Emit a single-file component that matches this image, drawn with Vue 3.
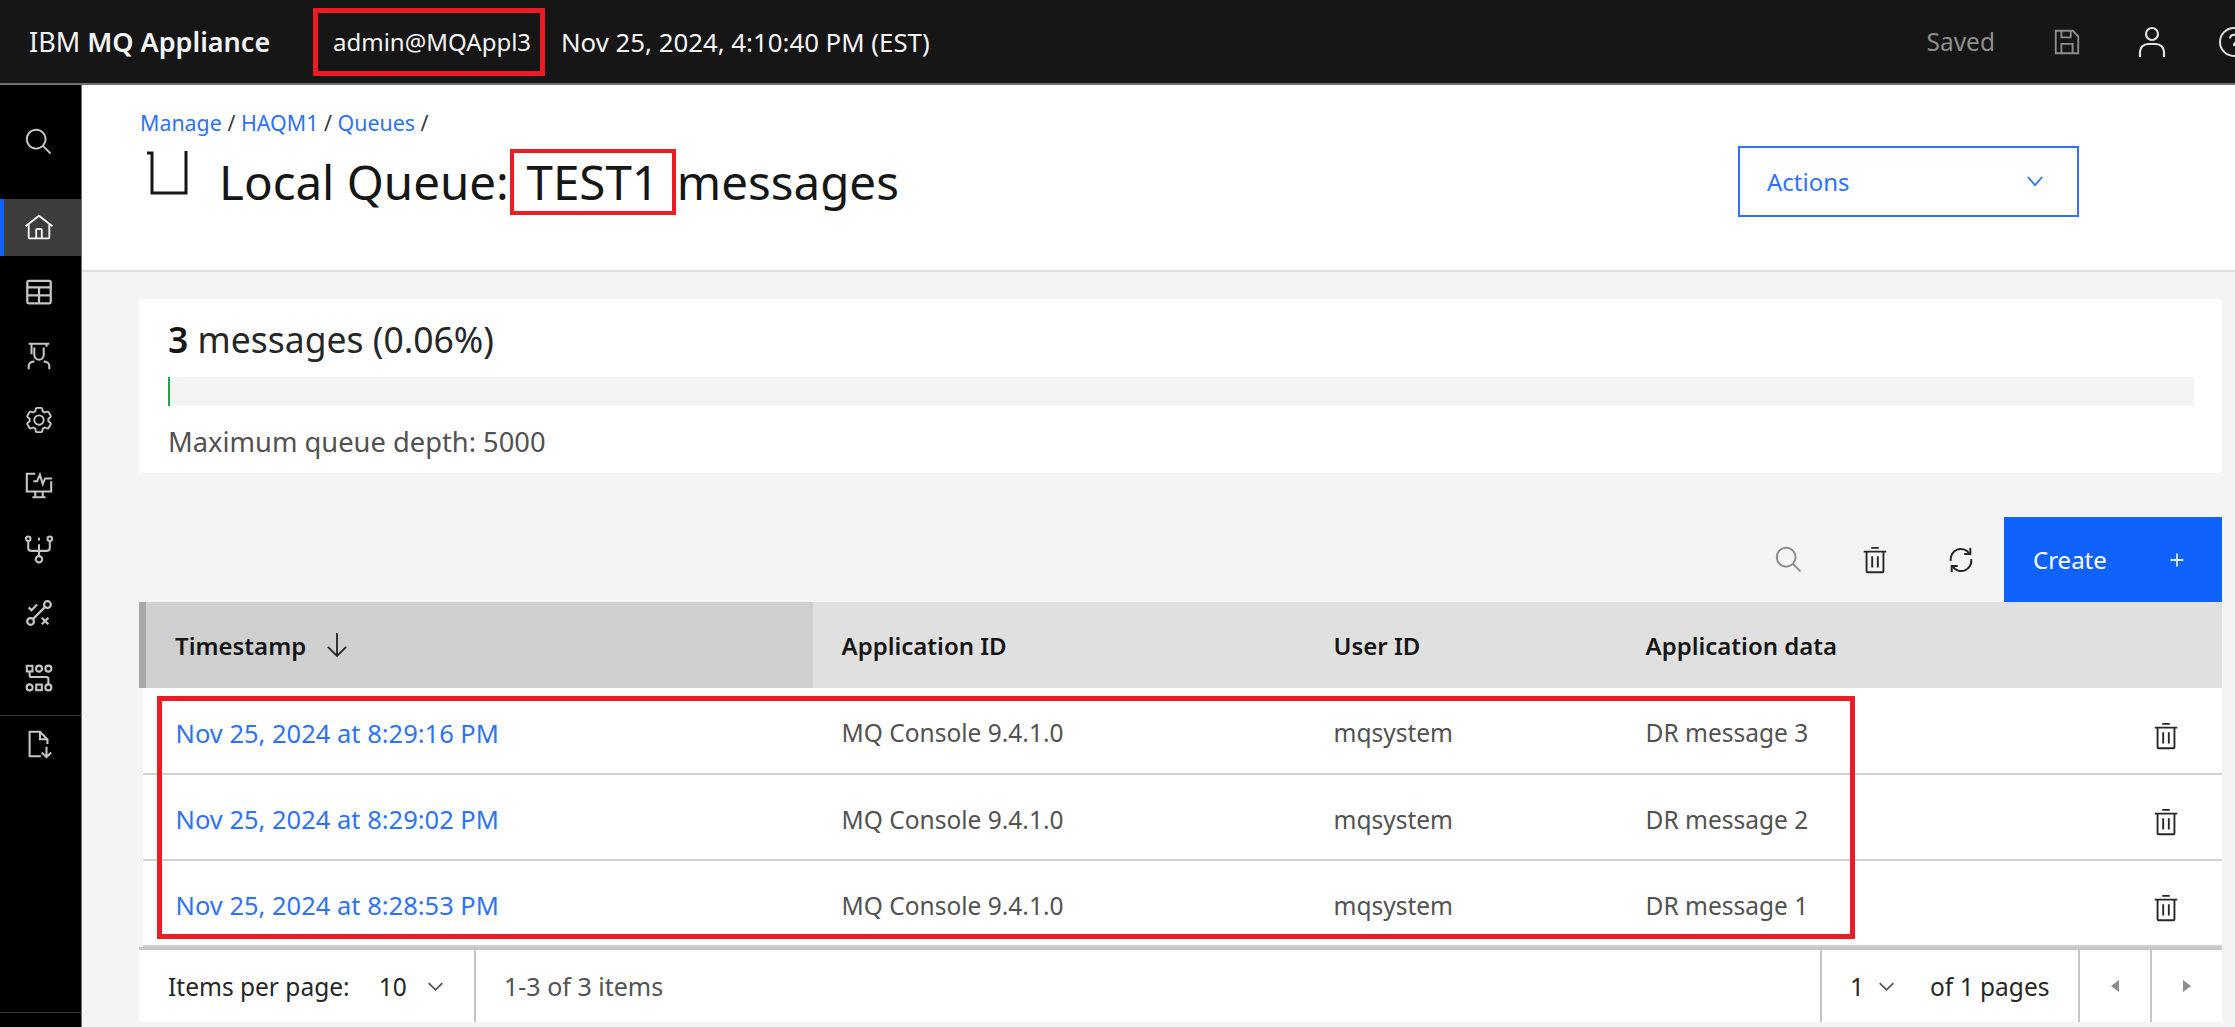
<script setup>
const rows = [
  { time: 'Nov 25, 2024 at 8:29:16 PM', app: 'MQ Console 9.4.1.0', user: 'mqsystem', data: 'DR message 3' },
  { time: 'Nov 25, 2024 at 8:29:02 PM', app: 'MQ Console 9.4.1.0', user: 'mqsystem', data: 'DR message 2' },
  { time: 'Nov 25, 2024 at 8:28:53 PM', app: 'MQ Console 9.4.1.0', user: 'mqsystem', data: 'DR message 1' }
]
const searchPath = 'M29 27.5859l-7.5521-7.5521a11.0177 11.0177 0 1 0-1.4141 1.4141L27.5859 29ZM4 13a9 9 0 1 1 9 9A9.01 9.01 0 0 1 4 13Z'
const trashPath = 'M12 12H14V24H12zM18 12H20V24H18zM4 6V8H6V28a2 2 0 002 2H24a2 2 0 002-2V8h2V6zM8 28V8H24V28zM12 2H20V4H12z'
</script>

<template>
  <div class="app">
    <header class="topbar">
      <div class="brand">IBM <b>MQ Appliance</b></div>
      <div class="user-box">admin@MQAppl3</div>
      <div class="clock">Nov 25, 2024, 4:10:40 PM (EST)</div>
      <div class="saved">Saved</div>
      <svg class="save-icon" viewBox="0 0 32 32" fill="none" stroke="#8d8d8d" stroke-width="2">
        <path d="M4 4H22L28 10V28H4Z" />
        <path d="M10 4V11H20V4M10 28V18H22V28" />
      </svg>
      <svg class="user-icon" viewBox="0 0 32 32" fill="none" stroke="#e0e0e0" stroke-width="2.2">
        <circle cx="16" cy="8" r="6" />
        <path d="M4 31V26A8 8 0 0 1 12 18H20A8 8 0 0 1 28 26V31" />
      </svg>
      <svg class="help-icon" viewBox="0 0 32 32" fill="none" stroke="#e0e0e0" stroke-width="2">
        <circle cx="16" cy="16" r="14" />
        <path d="M12 12.5A4 4 0 1 1 17.5 16.5C16.4 17 16 17.8 16 19V20" />
      </svg>
    </header>

    <div class="body">
      <nav class="sidenav">
        <div class="nav-item nav-search">
          <svg viewBox="0 0 32 32" fill="#c6c6c6"><path :d="searchPath" /></svg>
        </div>
        <div class="nav-item active">
          <svg viewBox="0 0 32 32" fill="#f4f4f4">
            <path d="M16.6123,2.2138a1.01,1.01,0,0,0-1.2427,0L1,13.4194l1.2427,1.5717L4,13.6209V26a2.0041,2.0041,0,0,0,2,2H26a2.0037,2.0037,0,0,0,2-2V13.63L29.7573,15,31,13.4282ZM18,26H14V18h4Zm2,0V18a2.0023,2.0023,0,0,0-2-2H14a2.002,2.002,0,0,0-2,2v8H6V12.0615l10-7.79,10,7.8043V26Z" />
          </svg>
        </div>
        <div class="nav-item">
          <svg viewBox="0 0 32 32" fill="none" stroke="#c6c6c6" stroke-width="2.4">
            <rect x="3.500" y="4" width="25" height="24" rx="1.5" />
            <path d="M3.500 11H28.500M3.500 19.500H28.500M16 11V28" />
          </svg>
        </div>
        <div class="nav-item">
          <svg viewBox="0 0 32 32" fill="none" stroke="#c6c6c6" stroke-width="2.2">
            <path d="M5 3H27M8 3V14M24 3V6M11 7V15A5 5 0 0 0 21 15V7" />
            <path d="M5 30V27A5 5 0 0 1 10 22H11M27 30V27A5 5 0 0 0 22 22H21" />
          </svg>
        </div>
        <div class="nav-item">
          <svg viewBox="0 0 32 32" fill="#c6c6c6">
            <path d="M27,16.76c0-.25,0-.5,0-.76s0-.51,0-.77l1.92-1.68A2,2,0,0,0,29.3,11L26.94,7a2,2,0,0,0-1.73-1,2,2,0,0,0-.64.1l-2.43.82a11.35,11.35,0,0,0-1.31-.75l-.51-2.52a2,2,0,0,0-2-1.61H13.64a2,2,0,0,0-2,1.61l-.51,2.52a11.48,11.48,0,0,0-1.32.75L7.43,6.06A2,2,0,0,0,6.79,6,2,2,0,0,0,5.06,7L2.7,11a2,2,0,0,0,.41,2.51L5,15.24c0,.25,0,.5,0,.76s0,.51,0,.77L3.11,18.45A2,2,0,0,0,2.7,21L5.06,25a2,2,0,0,0,1.73,1,2,2,0,0,0,.64-.1l2.43-.82a11.35,11.35,0,0,0,1.31.75l.51,2.52a2,2,0,0,0,2,1.61h4.72a2,2,0,0,0,2-1.61l.51-2.52a11.48,11.48,0,0,0,1.32-.75l2.42.82a2,2,0,0,0,.64.1,2,2,0,0,0,1.73-1L29.3,21a2,2,0,0,0-.41-2.51ZM25.21,24l-3.43-1.16a8.86,8.86,0,0,1-2.71,1.57L18.36,28H13.64l-.71-3.55a9.36,9.36,0,0,1-2.7-1.57L6.79,24,4.43,20l2.72-2.4a8.9,8.9,0,0,1,0-3.13L4.43,12,6.79,8l3.43,1.16a8.86,8.86,0,0,1,2.71-1.57L13.64,4h4.72l.71,3.55a9.36,9.36,0,0,1,2.7,1.57L25.21,8,27.57,12l-2.72,2.4a8.9,8.9,0,0,1,0,3.13L27.57,20Z" />
            <path d="M16,22a6,6,0,1,1,6-6A5.94,5.94,0,0,1,16,22Zm0-10a3.91,3.91,0,0,0-4,4,3.91,3.91,0,0,0,4,4,3.91,3.91,0,0,0,4-4A3.91,3.91,0,0,0,16,12Z" />
          </svg>
        </div>
        <div class="nav-item">
          <svg viewBox="0 0 32 32" fill="none" stroke="#c6c6c6" stroke-width="2.2">
            <path d="M12 4H3V23H29V12M9 29H23M12 23V29M20 23V29" />
            <path d="M10 12H14L17 5L20 15L22.5 9H30" />
          </svg>
        </div>
        <div class="nav-item">
          <svg viewBox="0 0 32 32" fill="none" stroke="#c6c6c6" stroke-width="2.2">
            <circle cx="4.500" cy="5" r="2.400" /><circle cx="27.500" cy="5" r="2.400" /><circle cx="16" cy="27" r="3.400" />
            <path d="M4.500 8V15A3 3 0 0 0 7.500 18H24.500A3 3 0 0 0 27.500 15V8M16 11V23M16 4V7" />
          </svg>
        </div>
        <div class="nav-item">
          <svg viewBox="0 0 32 32" fill="none" stroke="#c6c6c6" stroke-width="2.4">
            <circle cx="25" cy="7" r="3.600" /><circle cx="7" cy="25" r="3.600" />
            <path d="M10 22L22 10M5 10L8 13L14 7M19 21L26 28M26 21L19 28" />
          </svg>
        </div>
        <div class="nav-item">
          <svg viewBox="0 0 32 32" fill="none" stroke="#c6c6c6" stroke-width="2.2">
            <rect x="3" y="3" width="6" height="6" /><circle cx="16" cy="6" r="3.200" /><circle cx="26" cy="6" r="3.200" />
            <circle cx="6" cy="26" r="3.200" /><rect x="13" y="23" width="6" height="6" /><circle cx="26" cy="26" r="3.200" />
            <path d="M6 9V13A2 2 0 0 0 8 15H24A2 2 0 0 1 26 17V22.800" />
          </svg>
        </div>
        <div class="nav-divider"></div>
        <div class="nav-item nav-doc">
          <svg viewBox="0 0 32 32" fill="none" stroke="#c6c6c6" stroke-width="2.2">
            <path d="M18 29H6V3H17L25 11V16M17 3V11H25M24 19V30M19 25L24 30L29 25" />
          </svg>
        </div>
        <div class="nav-foot"></div>
      </nav>

      <main class="main">
        <section class="page-head">
          <div class="crumbs">
            <a>Manage</a> / <a>HAQM1</a> / <a>Queues</a> /
          </div>
          <div class="title-row">
            <h1 class="title">
              <svg class="queue-icon" viewBox="0 0 45 45" fill="none" stroke="#161616" stroke-width="3">
                <path d="M1 2H6V42H40V0" />
              </svg>
              <span class="title-text">Local Queue:</span>
              <span class="name-box">TEST1</span>
              <span class="title-text">messages</span>
            </h1>
            <button class="actions">
              <span>Actions</span>
              <svg viewBox="0 0 20 12" fill="none" stroke="#2e72fb" stroke-width="2"><path d="M2 1L10 10L18 1" /></svg>
            </button>
          </div>
        </section>

        <section class="content">
          <div class="depth-card">
            <div class="depth-count"><b>3</b> messages (0.06%)</div>
            <div class="depth-bar"><div class="depth-fill" :style="{ width: '2px' }"></div></div>
            <div class="depth-max">Maximum queue depth: 5000</div>
          </div>

          <div class="toolbar">
            <button class="tool">
              <svg viewBox="0 0 32 32" fill="#8d8d8d"><path :d="searchPath" /></svg>
            </button>
            <button class="tool">
              <svg viewBox="0 0 32 32" fill="#262626"><path :d="trashPath" /></svg>
            </button>
            <button class="tool">
              <svg class="refresh" viewBox="2 2 28 28" fill="none" stroke="#262626" stroke-width="2.200">
                <path d="M5 17A11 11 0 0 1 25 9M27 15A11 11 0 0 1 7 23" />
                <path d="M26 3V9.500H19.500M6 29V22.500H12.500" />
              </svg>
            </button>
            <button class="create">
              <span>Create</span>
              <svg viewBox="0 0 16 16" fill="none" stroke="#dfe9ff" stroke-width="1.8"><path d="M8 1.500V14.500M1.500 8H14.500" /></svg>
            </button>
          </div>

          <div class="table-wrap">
            <table class="msgs">
              <colgroup>
                <col class="c-time" /><col class="c-app" /><col class="c-user" /><col class="c-data" /><col />
              </colgroup>
              <thead>
                <tr>
                  <th class="sorted">
                    <span class="sort-label">Timestamp
                      <svg viewBox="0 0 24 28" fill="none" stroke="#262626" stroke-width="2"><path d="M12 1V26M2 16L12 26L22 16" /></svg>
                    </span>
                  </th>
                  <th>Application ID</th>
                  <th>User ID</th>
                  <th>Application data</th>
                  <th></th>
                </tr>
              </thead>
              <tbody>
                <tr v-for="row in rows" :key="row.time">
                  <td class="time-cell"><a>{{ row.time }}</a></td>
                  <td>{{ row.app }}</td>
                  <td>{{ row.user }}</td>
                  <td>{{ row.data }}</td>
                  <td class="row-action">
                    <svg viewBox="0 0 32 32" fill="#262626"><path :d="trashPath" /></svg>
                  </td>
                </tr>
              </tbody>
            </table>
            <div class="rows-box"></div>

            <div class="pager">
              <div class="pager-size">
                <span>Items per page:</span>
                <span class="pager-num">10</span>
                <svg class="chev" viewBox="0 0 20 12" fill="none" stroke="#525252" stroke-width="2"><path d="M2 2L10 10L18 2" /></svg>
              </div>
              <div class="pager-count">1-3 of 3 items</div>
              <div class="pager-page">
                <span class="page-num">1</span>
                <svg class="chev" viewBox="0 0 20 12" fill="none" stroke="#525252" stroke-width="2"><path d="M2 2L10 10L18 2" /></svg>
                <span class="page-of">of 1 pages</span>
              </div>
              <div class="pager-btn"><span class="tri tri-left"></span></div>
              <div class="pager-btn"><span class="tri tri-right"></span></div>
            </div>
          </div>
        </section>
      </main>
    </div>
  </div>
</template>

<style>
body {
  margin: 0;
  overflow: hidden;
}
</style>

<style scoped>
.app {
  width: 2235px;
  height: 1027px;
  display: flex;
  flex-direction: column;
  overflow: hidden;
  font-family: "Noto Sans", Roboto, sans-serif;
  color: #161616;
  background: #f4f4f4;
}
button {
  font-family: inherit;
  border: none;
  padding: 0;
  cursor: pointer;
}
.topbar {
  height: 83px;
  flex: none;
  display: flex;
  align-items: center;
  background: #161616;
  border-bottom: 2px solid #6f6f6f;
  color: #f4f4f4;
  font-size: 24.500px;
}
.brand {
  margin-left: 29px;
  width: 284px;
  font-size: 27px;
  white-space: nowrap;
}
.brand b {
  font-weight: 600;
}
.user-box {
  box-sizing: border-box;
  width: 232px;
  height: 68px;
  display: flex;
  align-items: center;
  padding-left: 15px;
  border: 5px solid #ed1c24;
  font-size: 24px;
  white-space: nowrap;
}
.clock {
  margin-left: 16px;
  font-size: 25.800px;
  white-space: nowrap;
}
.saved {
  margin-left: auto;
  color: #8d8d8d;
}
.save-icon {
  width: 30px;
  height: 30px;
  margin-left: 57px;
}
.user-icon {
  width: 32px;
  height: 36px;
  margin-left: 54px;
}
.help-icon {
  width: 32px;
  height: 32px;
  margin-left: 50px;
  margin-right: -15px;
  flex: none;
}

.body {
  flex: 1;
  display: flex;
  min-height: 0;
}
.sidenav {
  width: 81px;
  flex: none;
  display: flex;
  flex-direction: column;
  background: #000;
  border-right: 1px solid #6f6f6f;
}
.nav-item {
  height: 64.300px;
  flex: none;
  display: flex;
  align-items: center;
  justify-content: center;
  box-sizing: border-box;
  padding-right: 3px;
}
.nav-item svg {
  width: 30px;
  height: 30px;
}
.nav-search {
  margin-top: 25px;
  margin-bottom: 21px;
}
.nav-item.active {
  height: 57px;
  margin: 4px 0 3.300px;
  background: #3d3d3d;
  border-left: 4px solid #0f62fe;
  padding-right: 7px;
}
.nav-divider {
  height: 1px;
  background: #393939;
  margin-top: 5px;
}
.nav-doc {
  height: 56px;
}
.nav-foot {
  margin-top: auto;
  height: 14px;
  border-top: 1px solid #393939;
}

.main {
  flex: 1;
  min-width: 0;
  display: flex;
  flex-direction: column;
}
.page-head {
  box-sizing: border-box;
  height: 187px;
  flex: none;
  padding: 24px 156px 0 58px;
  background: #fff;
  border-bottom: 2px solid #e0e0e0;
}
.crumbs {
  height: 37px;
  line-height: 28px;
  font-size: 21.400px;
  color: #393939;
}
.crumbs a {
  color: #2e72fb;
}
.title-row {
  display: flex;
  justify-content: space-between;
  align-items: center;
}
.title {
  display: flex;
  align-items: center;
  margin: 0;
  font-size: 47.500px;
  font-weight: 400;
  white-space: nowrap;
}
.queue-icon {
  width: 45px;
  height: 45px;
  margin: -16px 28px 0 6px;
}
.name-box {
  box-sizing: border-box;
  width: 166px;
  height: 66px;
  display: flex;
  align-items: center;
  justify-content: center;
  margin: 0 1px;
  border: 4px solid #ed1c24;
}
.actions {
  box-sizing: border-box;
  width: 341px;
  height: 71px;
  display: flex;
  align-items: center;
  justify-content: space-between;
  padding: 0 33px 0 27px;
  background: #fff;
  border: 2px solid #2e72fb;
  color: #2e72fb;
  font-size: 24px;
}
.actions svg {
  width: 18px;
  height: 11px;
}

.content {
  flex: 1;
  padding: 27px 13px 0 57px;
}
.depth-card {
  box-sizing: border-box;
  height: 174px;
  padding: 22px 28px 0 29px;
  background: #fff;
}
.depth-count {
  height: 56px;
  line-height: 36px;
  font-size: 35.500px;
  color: #262626;
}
.depth-count b {
  font-weight: 600;
  color: #161616;
}
.depth-bar {
  height: 29px;
  background: #f4f4f4;
}
.depth-fill {
  height: 100%;
  background: #24a148;
}
.depth-max {
  margin-top: 20px;
  font-size: 27.300px;
  line-height: 32px;
  color: #525252;
}

.toolbar {
  height: 85px;
  margin-top: 44px;
  display: flex;
  justify-content: flex-end;
}
.tool {
  width: 86px;
  display: flex;
  align-items: center;
  justify-content: center;
  background: transparent;
}
.tool svg {
  width: 30px;
  height: 30px;
}
.tool svg.refresh {
  width: 26px;
  height: 26px;
}
.create {
  width: 218px;
  display: flex;
  align-items: center;
  justify-content: space-between;
  padding: 0 37px 0 29px;
  background: #0f62fe;
  color: #fff;
  font-size: 24px;
}
.create svg {
  width: 16px;
  height: 16px;
}

.table-wrap {
  position: relative;
}
.msgs {
  width: 100%;
  table-layout: fixed;
  border-collapse: collapse;
  font-size: 24.500px;
}
.c-time {
  width: 670px;
}
.c-app {
  width: 492px;
}
.c-user {
  width: 312px;
}
.c-data {
  width: 400px;
}
.msgs th {
  height: 86px;
  padding: 0 0 0 29px;
  background: #e0e0e0;
  text-align: left;
  font-size: 24px;
  font-weight: 600;
  color: #161616;
}
.msgs th.sorted {
  background: #cfcfcf;
  border-left: 7px solid #a8a8a8;
}
.sort-label {
  display: flex;
  align-items: center;
  gap: 20px;
}
.sort-label svg {
  width: 22px;
  height: 26px;
}
.msgs td {
  height: 86px;
  box-sizing: border-box;
  padding: 4px 0 0 29px;
  background: #fff;
  border-bottom: 2px solid #d0d0d0;
  color: #525252;
}
.msgs td.time-cell {
  padding-left: 33px;
  font-size: 25.500px;
}
.time-cell a {
  color: #2e72fb;
}
.msgs td.row-action {
  padding: 6px 41px 0 0;
  text-align: right;
}
.row-action svg {
  width: 30px;
  height: 30px;
  vertical-align: middle;
}
.rows-box {
  position: absolute;
  left: 18px;
  top: 94px;
  box-sizing: border-box;
  width: 1698px;
  height: 243px;
  border: 5px solid #ed1c24;
  pointer-events: none;
}

.pager {
  box-sizing: border-box;
  height: 75px;
  display: flex;
  align-items: stretch;
  background: #fff;
  border-top: 3px solid #c6c6c6;
  font-size: 24.500px;
}
.pager > div {
  display: flex;
  align-items: center;
}
.pager-size {
  box-sizing: border-box;
  width: 337px;
  padding-left: 29px;
  border-right: 2px solid #c6c6c6;
  color: #262626;
}
.pager-num {
  margin-left: 29px;
}
.chev {
  width: 17px;
  height: 11px;
  margin-left: 14px;
}
.pager-size .chev {
  margin-left: 20px;
}
.pager-count {
  flex: 1;
  padding-left: 28px;
  font-size: 25px;
  color: #525252;
}
.pager-page {
  box-sizing: border-box;
  width: 258px;
  padding-left: 28px;
  border-left: 2px solid #c6c6c6;
  color: #262626;
}
.page-of {
  margin-left: 35px;
}
.pager-btn {
  box-sizing: border-box;
  width: 72px;
  justify-content: center;
  border-left: 2px solid #c6c6c6;
}
.tri {
  width: 0;
  height: 0;
  border-top: 6px solid transparent;
  border-bottom: 6px solid transparent;
}
.tri-left {
  border-right: 8px solid #8d8d8d;
}
.tri-right {
  border-left: 8px solid #8d8d8d;
}
</style>
